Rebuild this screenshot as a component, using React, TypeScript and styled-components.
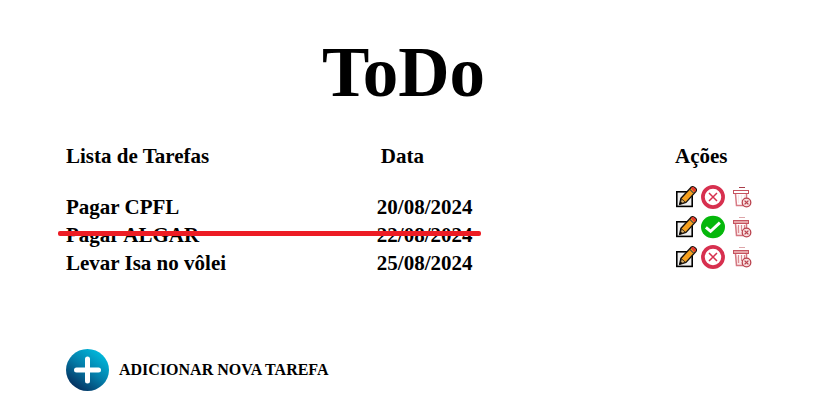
import React from 'react';
import styled, { createGlobalStyle } from 'styled-components';

const GlobalStyle = createGlobalStyle`
  *, *::before, *::after { box-sizing: border-box; }
  body {
    margin: 0;
    background: #fff;
    color: #000;
    font-family: "Liberation Serif", "Times New Roman", serif;
    font-weight: 700;
  }
`;

const Page = styled.main`
  padding: 32px 66px 24px;
`;

const Title = styled.h1`
  margin: 0 0 32px;
  padding-right: 14px;
  font-size: 71px;
  line-height: 80px;
  text-align: center;
`;

const Board = styled.section`
  display: flex;
  justify-content: space-between;
  align-items: flex-start;
`;

const TaskTable = styled.table`
  width: 59%;
  border-collapse: collapse;
  font-size: 21px;
  line-height: 24px;
  text-align: left;
`;

const HeadCell = styled.th<{ $inset?: boolean }>`
  padding: 0 0 25px ${p => (p.$inset ? '4px' : '0')};
`;

const TaskRow = styled.tr<{ $done: boolean }>`
  position: relative;

  &::after {
    content: "";
    display: ${p => (p.$done ? 'block' : 'none')};
    position: absolute;
    left: -8px;
    right: -8px;
    top: 10px;
    height: 5px;
    border-radius: 2px;
    background: #ed1c24;
  }
`;

const TaskCell = styled.td<{ $narrow?: boolean }>`
  width: ${p => (p.$narrow ? '1px' : 'auto')};
  padding: 2px 0;
  white-space: nowrap;
`;

const Actions = styled.div`
  width: 80px;
`;

const ActionsTitle = styled.h2`
  margin: 0 0 14px;
  font-size: 21px;
  line-height: 24px;
`;

const ActionList = styled.ul`
  margin: 0;
  padding: 0;
  list-style: none;
`;

const ActionGroup = styled.li`
  display: flex;
  align-items: center;
  gap: 4px;
  height: 30px;
`;

const IconButton = styled.button`
  display: flex;
  padding: 0;
  border: 0;
  background: none;
  cursor: pointer;
`;

const AddButton = styled.button`
  display: flex;
  align-items: center;
  gap: 9px;
  margin-top: 72px;
  padding: 0;
  border: 0;
  background: none;
  color: inherit;
  font: inherit;
  font-size: 16px;
  line-height: 20px;
  cursor: pointer;
`;

const EditIcon = () => (
  <svg width="22" height="24" viewBox="0 0 22 24" aria-hidden="true">
    <rect x="1.8" y="6.8" width="15.4" height="14.6" fill="#efefef" stroke="#000" strokeWidth="1.6" />
    <path d="M4.6 19.4 6 13.2 16 2.4Q17.6 1 19.2 2.2L20.8 3.6Q22 5 20.8 6.6L11 17.4Z" fill="#f5a01e" stroke="#15100d" strokeWidth="1.4" strokeLinejoin="round" />
    <path d="M16 3.3 17 2.3Q18.2 1.6 19.2 2.5L20.5 3.7Q21.3 4.8 20.5 5.9L19.4 7.2Z" fill="#e5382d" />
    <path d="m14.8 4.4 4 3.9" stroke="#4a4444" strokeWidth="1.1" />
    <path d="m6.4 13.8 4 3.4-5.2 1.7Z" fill="#dcb575" stroke="#15100d" strokeWidth=".8" />
    <path d="m4.6 19.4.9-3 2.2 1.9Z" fill="#000" />
  </svg>
);

const PendingIcon = () => (
  <svg width="24" height="24" viewBox="0 0 24 24" aria-hidden="true">
    <circle cx="12" cy="12" r="10.1" fill="#fff" stroke="#d7304f" strokeWidth="3.7" />
    <path d="m8 8 8 8m0-8-8 8" stroke="#d7304f" strokeWidth="1.5" />
  </svg>
);

const DoneIcon = () => (
  <svg width="24" height="24" viewBox="0 0 24 24" aria-hidden="true">
    <ellipse cx="12" cy="12" rx="12" ry="11.3" fill="#05b70b" />
    <path d="m4.9 12.3 4.7 4 9.3-8.6" fill="none" stroke="#fff" strokeWidth="3" />
  </svg>
);

const TrashIcon = ({ tinted }: { tinted: boolean }) => (
  <svg width="24" height="24" viewBox="-3 0 24 24" aria-hidden="true">
    <path d="M7 2.5h6" stroke={tinted ? '#dda5a9' : '#a93d4a'} strokeWidth="1" />
    <rect x="1.5" y="5.5" width="15" height="3" fill={tinted ? '#e6a5a8' : '#fff'} stroke="#c65360" />
    <path d="M3.5 9 4.5 20.5h7M14.5 9v5" fill={tinted ? '#fbe9e9' : 'none'} stroke={tinted ? '#d47680' : '#d87a85'} strokeWidth="1.5" />
    <path d="M6.5 10v8M9.5 10v6M12.5 10v4" stroke={tinted ? '#da8c93' : '#f7e6e7'} strokeWidth="1.3" />
    <circle cx="14.5" cy="17.5" r="4.3" fill="#f8e0e1" stroke="#b9424d" strokeWidth="1.3" />
    <path d="m12.6 15.6 3.8 3.8m0-3.8-3.8 3.8" stroke="#b9424d" strokeWidth="1.3" />
  </svg>
);

const AddIcon = () => (
  <svg width="44" height="42" viewBox="0 0 44 42" aria-hidden="true">
    <defs>
      <linearGradient id="addFill" x1="0.82" y1="0.08" x2="0.2" y2="0.92">
        <stop offset="0" stopColor="#00b9dc" />
        <stop offset="0.5" stopColor="#047da9" />
        <stop offset="1" stopColor="#04305f" />
      </linearGradient>
    </defs>
    <ellipse cx="21.5" cy="21" rx="21.5" ry="21" fill="url(#addFill)" />
    <path d="M21.5 10v22M10.5 21h22" stroke="#fff" strokeWidth="5" strokeLinecap="round" />
  </svg>
);

interface Task {
  name: string;
  date: string;
  done: boolean;
  tinted: boolean;
}

const tasks: Task[] = [
  { name: 'Pagar CPFL', date: '20/08/2024', done: false, tinted: false },
  { name: 'Pagar ALGAR', date: '22/08/2024', done: true, tinted: true },
  { name: 'Levar Isa no vôlei', date: '25/08/2024', done: false, tinted: true },
];

export default function App() {
  return (
    <>
      <GlobalStyle />
      <Page>
        <Title>ToDo</Title>
        <Board>
          <TaskTable>
            <thead>
              <tr>
                <HeadCell scope="col">Lista de Tarefas</HeadCell>
                <HeadCell scope="col" $inset>Data</HeadCell>
              </tr>
            </thead>
            <tbody>
              {tasks.map(task => (
                <TaskRow key={task.name} $done={task.done}>
                  <TaskCell>{task.name}</TaskCell>
                  <TaskCell $narrow>{task.date}</TaskCell>
                </TaskRow>
              ))}
            </tbody>
          </TaskTable>
          <Actions>
            <ActionsTitle>Ações</ActionsTitle>
            <ActionList>
              {tasks.map(task => (
                <ActionGroup key={task.name}>
                  <IconButton type="button" aria-label={`Editar ${task.name}`}>
                    <EditIcon />
                  </IconButton>
                  <IconButton type="button" aria-label={`Concluir ${task.name}`} aria-pressed={task.done}>
                    {task.done ? <DoneIcon /> : <PendingIcon />}
                  </IconButton>
                  <IconButton type="button" aria-label={`Excluir ${task.name}`}>
                    <TrashIcon tinted={task.tinted} />
                  </IconButton>
                </ActionGroup>
              ))}
            </ActionList>
          </Actions>
        </Board>
        <AddButton type="button">
          <AddIcon />
          ADICIONAR NOVA TAREFA
        </AddButton>
      </Page>
    </>
  );
}
